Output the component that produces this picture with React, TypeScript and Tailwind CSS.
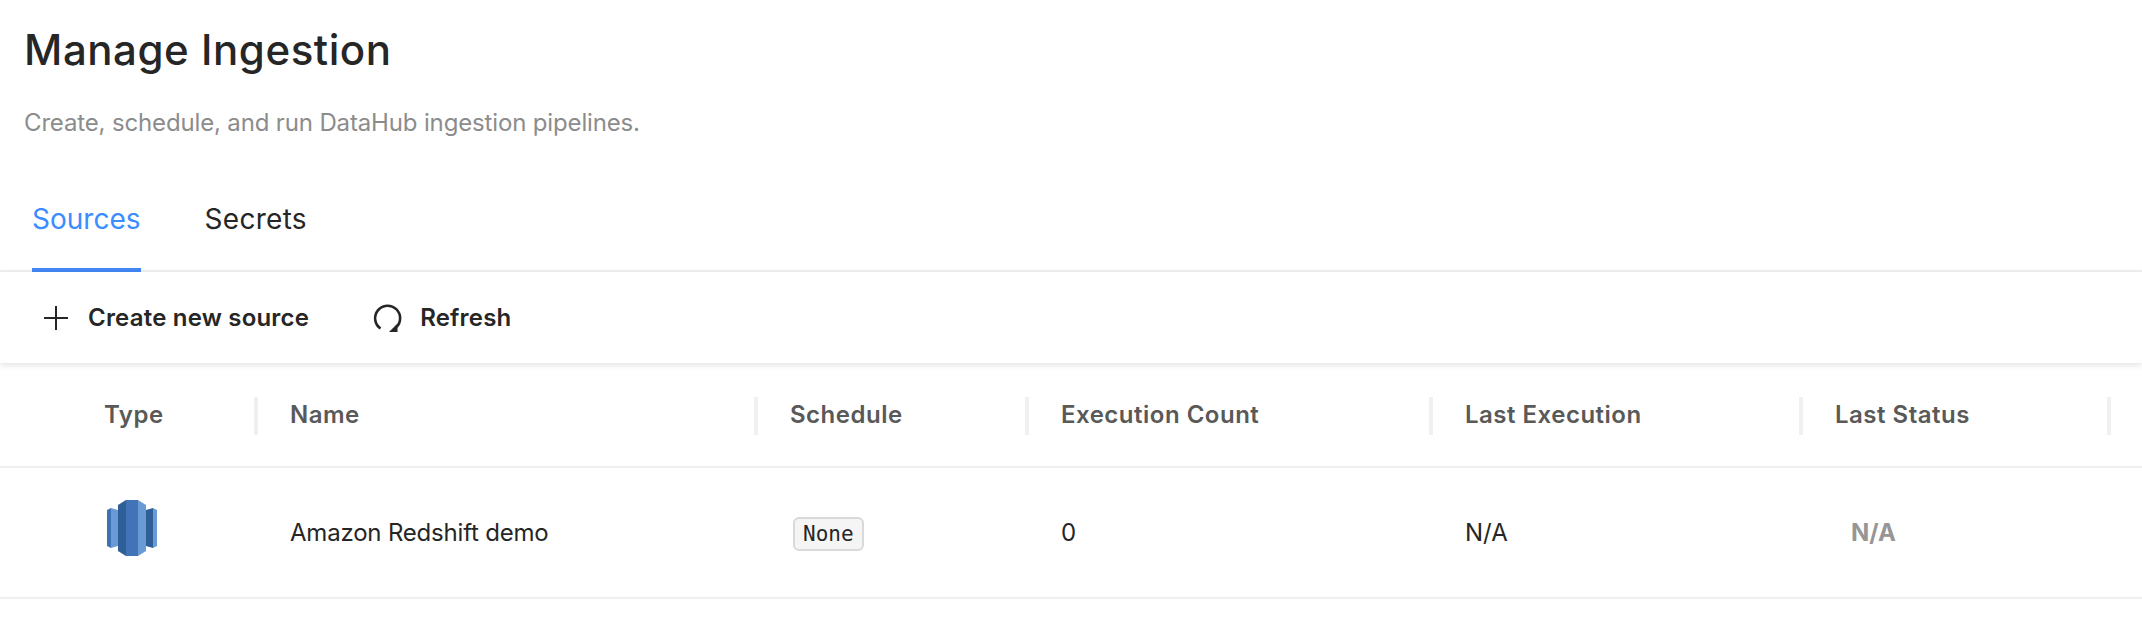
const columns = [
  { label: "Type", width: "w-[258px]" },
  { label: "Name", width: "w-[500px]" },
  { label: "Schedule", width: "w-[271px]" },
  { label: "Execution Count", width: "w-[404px]" },
  { label: "Last Execution", width: "w-[370px]" },
  { label: "Last Status", width: "w-[308px]" },
];

function RedshiftLogo() {
  return (
    <svg width="50" height="56" viewBox="0 0 50 56">
      <polygon points="0,10 4,8 4,48 0,46" fill="#3f72b3" />
      <polygon points="4,8 11,10 11,46 4,48" fill="#6a9bd6" />
      <polygon points="39,10 46,8 46,48 39,46" fill="#2f5f97" />
      <polygon points="46,8 50,10 50,46 46,48" fill="#6a9bd6" />
      <polygon points="11,5 19,0 19,56 11,51" fill="#2f5f97" />
      <polygon points="19,0 31,0 31,56 19,56" fill="#4273b6" />
      <polygon points="31,0 39,5 39,51 31,56" fill="#6a9bd6" />
    </svg>
  );
}

function PlusIcon() {
  return (
    <svg width="26" height="26" viewBox="0 0 26 26" className="text-[#262626]">
      <path d="M13 1v24M1 13h24" stroke="currentColor" strokeWidth="2" fill="none" />
    </svg>
  );
}

function RefreshIcon() {
  return (
    <svg width="30" height="30" viewBox="0 0 30 30" className="text-[#262626]">
      <path
        d="M7.5 25.5A12.5 12.5 0 1 1 23 24.5"
        stroke="currentColor"
        strokeWidth="2.6"
        fill="none"
      />
      <path d="M24.5 20.5v8.5h-8.5z" fill="currentColor" />
    </svg>
  );
}

export default function App() {
  return (
    <div className="min-h-[634px] bg-white font-['Inter',sans-serif] text-[#262626]">
      {/* Page header */}
      <div className="h-[176px] px-6 pt-[23px]">
        <h1 className="text-[42px] leading-[54px] font-medium tracking-[0.55px]">
          Manage Ingestion
        </h1>
        <p className="mt-[31px] text-[24px] leading-[30px] text-[#8c8c8c] tracking-[-0.15px]">
          Create, schedule, and run DataHub ingestion pipelines.
        </p>
      </div>

      {/* Tabs */}
      <div className="flex h-[96px] gap-[64px] border-b-2 border-[#f0f0f0] px-8">
        <div className="-mb-[2px] flex h-[96px] items-center border-b-4 border-[#4287f5] pb-[6px] text-[28px] text-[#3b8cff]">
          Sources
        </div>
        <div className="flex h-[96px] items-center pb-[10px] text-[28px] tracking-[0.3px]">Secrets</div>
      </div>

      {/* Toolbar */}
      <div className="relative z-10 flex h-[91px] items-center gap-[64px] pl-[43px] shadow-[0_2px_6px_rgba(0,0,0,0.12)]">
        <button className="flex items-center gap-[19px] text-[24px] font-semibold tracking-[0.2px]">
          <PlusIcon />
          Create new source
        </button>
        <button className="flex items-center gap-[17px] text-[24px] font-semibold tracking-[0.2px]">
          <RefreshIcon />
          Refresh
        </button>
      </div>

      {/* Table header */}
      <div className="flex h-[105px] border-b-2 border-[#f0f0f0]">
        {columns.map((col, i) => (
          <div
            key={col.label}
            className={`relative flex items-center text-[24px] font-semibold tracking-[0.5px] text-[#595959] ${col.width} ${i === 0 ? "pl-[104px]" : "pl-8"}`}
          >
            {col.label}
            <span className="absolute right-0 top-[34px] h-[38px] w-1 bg-[#f0f0f0]" />
          </div>
        ))}
      </div>

      {/* Table row */}
      <div className="flex h-[131px] items-center border-b-2 border-[#f0f0f0] text-[24px]">
        <div className="w-[258px] pb-[9px] pl-[107px]">
          <RedshiftLogo />
        </div>
        <div className="w-[500px] pl-8 tracking-[-0.2px]">Amazon Redshift demo</div>
        <div className="w-[271px] pl-[35px]">
          <span className="inline-block rounded-md border-2 border-[#d9d9d9] bg-[#f5f5f5] px-2 font-['DejaVu_Sans_Mono',monospace] text-[21px] leading-[30px]">
            None
          </span>
        </div>
        <div className="w-[404px] pl-8">0</div>
        <div className="w-[370px] pl-8">N/A</div>
        <div className="w-[308px] pl-[48px] font-bold text-[#969696]">N/A</div>
      </div>
    </div>
  );
}
